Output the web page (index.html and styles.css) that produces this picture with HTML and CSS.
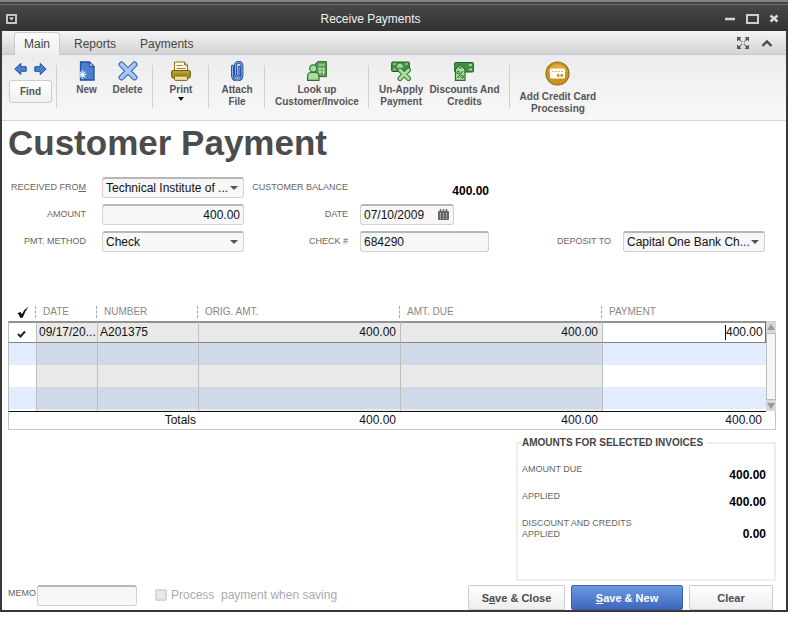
FILE: index.html
```html
<!DOCTYPE html>
<html lang="en">
<head>
<meta charset="utf-8">
<title>Receive Payments</title>
<link rel="stylesheet" href="styles.css">
</head>
<body>
<div class="window">
  <header class="titlebar">
    <button class="chrome" aria-label="Window menu"><svg width="11" height="10" viewBox="0 0 11 10"><rect x="1" y="1" width="9" height="8" fill="#333" stroke="#c4c4c4" stroke-width="2"/><path d="M3 3.5h5L5.500 6.500z" fill="#e0e0e0"/></svg></button>
    <h1 class="caption">Receive Payments</h1>
    <div class="chrome-group">
      <button class="chrome" aria-label="Minimize"><svg width="12" height="12" viewBox="0 0 12 12"><path d="M1 6h10" stroke="#d6d6d6" stroke-width="2.500"/></svg></button>
      <button class="chrome" aria-label="Maximize"><svg width="13" height="12" viewBox="0 0 13 12"><rect x="1" y="2" width="11" height="8" fill="none" stroke="#cfcfcf" stroke-width="2"/></svg></button>
      <button class="chrome" aria-label="Close"><svg width="10" height="12" viewBox="0 0 10 12"><path d="M1.500 2.500l7 6M8.500 2.500l-7 6" stroke="#dcdcdc" stroke-width="2.400"/></svg></button>
    </div>
  </header>

  <nav class="tabs">
    <a class="tab tab-active" href="#main">Main</a>
    <a class="tab" href="#reports">Reports</a>
    <a class="tab" href="#payments">Payments</a>
    <div class="tab-tools">
      <button class="chrome" aria-label="Expand"><svg width="12" height="12" viewBox="0 0 12 12"><g fill="#555"><path d="M0 0h4.500L0 4.500zM12 0v4.500L7.500 0zM0 12V7.500L4.500 12zM12 12H7.500L12 7.500z"/></g><path d="M1.500 1.500l3.500 3.500M10.500 1.500L7 5M1.500 10.500L5 7M10.500 10.500L7 7" stroke="#555" stroke-width="1.500" stroke-dasharray="3 1"/></svg></button>
      <button class="chrome" aria-label="Collapse ribbon"><svg width="12" height="12" viewBox="0 0 12 12"><path d="M1.500 9L6 4.500 10.500 9" fill="none" stroke="#4a4a4a" stroke-width="2.400"/></svg></button>
    </div>
  </nav>

  <div class="toolbar">
    <div class="group group-find">
      <div class="arrows">
        <button class="chrome" aria-label="Previous"><svg width="13" height="14" viewBox="0 0 13 14"><path d="M.8 7L6.800 1.300v3.400h5.400v4.600H6.800v3.400z" fill="#4d80cc" stroke="#27509b"/></svg></button>
        <button class="chrome" aria-label="Next"><svg width="13" height="14" viewBox="0 0 13 14"><path d="M12.200 7L6.200 1.300v3.400H.8v4.600h5.400v3.400z" fill="#4d80cc" stroke="#27509b"/></svg></button>
      </div>
      <button class="find">Find</button>
    </div>
    <div class="group group-pair">
      <button class="tool"><svg width="20" height="20" viewBox="0 0 20 20"><path d="M3.500 1h9L17 5.500V19H3.500z" fill="#4a80cf" stroke="#24509f" stroke-width="1.300"/><path d="M12.500 1v4.500H17z" fill="#b6d2f5" stroke="#24509f"/><path d="M5.500 9v9M1.500 13.500h8M2.500 10.500l6 6M8.500 10.500l-6 6" stroke="#bcd8fb" stroke-width="1.400"/><circle cx="5.500" cy="13.500" r="1.600" fill="#fff"/></svg>New</button>
      <button class="tool"><svg width="20" height="20" viewBox="0 0 20 20"><path d="M3.500 3.500l13 13M16.500 3.500l-13 13" stroke="#3f6cb2" stroke-width="6" stroke-linecap="round"/><path d="M3.500 3.500l13 13M16.500 3.500l-13 13" stroke="#a8cbf6" stroke-width="3.600" stroke-linecap="round"/></svg>Delete</button>
    </div>
    <div class="group">
      <button class="tool"><svg width="20" height="20" viewBox="0 0 20 20"><path d="M3.500 11V1h10L16.500 4v7z" fill="#fffbe2" stroke="#8a7420"/><path d="M13.500 1v3h3" fill="#ddd09a" stroke="#8a7420"/><path d="M5.500 4.500h6M5.500 7.500h9" stroke="#9b8430"/><rect x=".6" y="9.500" width="18.800" height="7.500" rx="1.500" fill="#ac9023" stroke="#6f5b0c"/><path d="M2 11h16" stroke="#cbb04a"/><rect x="3.500" y="15" width="13" height="4.400" rx="1" fill="#f0e3a0" stroke="#7c670f"/></svg>Print<span class="drop"></span></button>
    </div>
    <div class="group">
      <button class="tool"><svg width="20" height="20" viewBox="0 0 20 20"><path d="M5.500 5v9.500a4.700 4.700 0 0 0 9.400 0V4.500a3.200 3.200 0 0 0-6.400 0v9a1.800 1.800 0 0 0 3.600 0V6" fill="none" stroke="#2c559f" stroke-width="3" stroke-linecap="round"/><path d="M5.500 5v9.500a4.700 4.700 0 0 0 9.400 0V4.500a3.200 3.200 0 0 0-6.400 0v9a1.800 1.800 0 0 0 3.600 0V6" fill="none" stroke="#8eb4ee" stroke-width="1" stroke-linecap="round"/></svg>Attach<br>File</button>
    </div>
    <div class="group group-lookup">
      <button class="tool"><svg width="20" height="20" viewBox="0 0 20 20"><path d="M8.500 2.500L11 .6h8.400v15H8.500z" fill="#5d9f58" stroke="#2d6830"/><path d="M12 4h5.500M13 6.500v7M16.500 6.500v7M11 8h7M11 11h7" stroke="#c4e8b9"/><path d="M.6 19.400v-4.200q0-3.700 3.700-3.700h4q3.700 0 3.700 3.700v4.200z" fill="#a9dda0" stroke="#2f7134" stroke-width="1.200"/><circle cx="6.300" cy="7.500" r="3.600" fill="#a9dda0" stroke="#2f7134" stroke-width="1.200"/></svg>Look up<br>Customer/Invoice</button>
    </div>
    <div class="group group-credits">
      <button class="tool"><svg width="20" height="20" viewBox="0 0 20 20"><rect x=".6" y="1" width="17.800" height="9.500" rx="1" fill="#459047" stroke="#226029"/><circle cx="9" cy="5.500" r="2.700" fill="#a6dba0"/><path d="M2.500 3h2M2.500 8.500h2M14.500 3h2" stroke="#b9e5b1" stroke-width="1.500"/><path d="M9 9l8.500 8.500M17.500 9l-8.500 8.500" stroke="#2f7535" stroke-width="5" stroke-linecap="round"/><path d="M9 9l8.500 8.500M17.500 9l-8.500 8.500" stroke="#addfa5" stroke-width="3" stroke-linecap="round"/></svg>Un-Apply<br>Payment</button>
      <button class="tool"><svg width="20" height="20" viewBox="0 0 20 20"><rect x=".6" y="1.500" width="18.800" height="9.500" rx="1" fill="#459047" stroke="#226029"/><path d="M15 4h3M15 8.500h3" stroke="#b9e5b1" stroke-width="1.500"/><path d="M1.500 19.400V8L6 3.800 11 8v11.400z" fill="#a8dc9f" stroke="#2b6d31" stroke-width="1.200"/><circle cx="6.200" cy="6.800" r="1" fill="#2b6d31"/><path d="M9 10l-5.500 7" stroke="#285f2c"/><circle cx="4.300" cy="11.600" r="1.300" fill="none" stroke="#285f2c"/><circle cx="8.300" cy="15.700" r="1.300" fill="none" stroke="#285f2c"/></svg>Discounts And<br>Credits</button>
    </div>
    <div class="group group-card">
      <button class="tool tool-card"><svg width="25" height="25" viewBox="0 0 25 25"><circle cx="12.500" cy="12.500" r="11.500" fill="#c9951f" stroke="#94701c" stroke-width="1.200"/><path d="M3 11a9.700 9.700 0 0 1 19 0" fill="#dcab3c"/><rect x="5" y="7.500" width="15" height="10" rx="1.500" fill="#fffdf4"/><path d="M7 10.500h11" stroke="#ddbb66" stroke-dasharray="2 1"/><path d="M12 14.500h6" stroke="#c48a0c" stroke-width="2.500" stroke-dasharray="2.500 1"/></svg>Add Credit Card<br>Processing</button>
    </div>
  </div>

  <main class="content">
    <h2 class="heading">Customer Payment</h2>

    <form class="fields">
      <label class="label lead" for="from">RECEIVED FRO<u>M</u></label>
      <div class="pick"><select class="box" id="from"><option>Technical Institute of ...</option></select></div>
      <span class="label">CUSTOMER BALANCE</span>
      <output class="balance">400.00</output>

      <label class="label lead" for="amount">AMOUNT</label>
      <input class="box money" id="amount" value="400.00">
      <label class="label" for="date">DATE</label>
      <div class="box date">
        <input class="bare" id="date" value="07/10/2009">
        <button class="chrome" type="button" aria-label="Calendar"><svg width="11" height="12" viewBox="0 0 11 12"><rect x="0" y="2" width="11" height="9" rx="1" fill="#666"/><path d="M2.500 0v4M5.500 0v4M8.500 0v4" stroke="#666" stroke-width="1.500"/><path d="M2.500 4v6M5.500 4v6M8.500 4v6" stroke="#bbb" stroke-width="1" stroke-dasharray="1.500 .8"/></svg></button>
      </div>

      <label class="label lead" for="method">PMT. METHOD</label>
      <div class="pick"><select class="box" id="method"><option>Check</option></select></div>
      <label class="label" for="check">CHECK #</label>
      <input class="box" id="check" value="684290">
      <label class="label" for="deposit">DEPOSIT TO</label>
      <div class="pick"><select class="box" id="deposit"><option>Capital One Bank Ch...</option></select></div>
    </form>

    <table class="invoices">
      <colgroup><col class="c-tick"><col class="c-date"><col class="c-number"><col class="c-amount"><col class="c-amount"><col><col class="c-scroll"></colgroup>
      <thead>
        <tr>
          <th class="tick"><svg width="12" height="12" viewBox="0 0 12 12"><path d="M.5 7.500l3-1.700 1.300 2.400Q7.500 3 11.500 .5 8 5.500 5.700 11.700H3.200Q2.500 9 .5 7.500z" fill="#111"/></svg></th>
          <th><span>DATE</span></th><th><span>NUMBER</span></th><th><span>ORIG. AMT.</span></th><th><span>AMT. DUE</span></th><th><span>PAYMENT</span></th><th></th>
        </tr>
      </thead>
      <tbody>
        <tr class="selected">
          <td class="tick"><svg width="9" height="8" viewBox="0 0 9 8"><path d="M1 4l2.500 2.500L8 1.500" fill="none" stroke="#222" stroke-width="2"/></svg></td>
          <td>09/17/20...</td><td>A201375</td><td class="money">400.00</td><td class="money">400.00</td>
          <td class="money edit"><input class="bare pay" aria-label="Payment" value="400.00"></td>
          <td class="scroll" rowspan="5"><div class="bar"><span class="up"></span><span class="thumb"></span><span class="down"></span></div></td>
        </tr>
        <tr><td></td><td></td><td></td><td></td><td></td><td></td></tr>
        <tr><td></td><td></td><td></td><td></td><td></td><td></td></tr>
        <tr><td></td><td></td><td></td><td></td><td></td><td></td></tr>
        <tr class="stub"><td></td><td></td><td></td><td></td><td></td><td></td></tr>
      </tbody>
      <tfoot>
        <tr><td colspan="3" class="money">Totals</td><td class="money">400.00</td><td class="money">400.00</td><td class="money">400.00</td><td></td></tr>
      </tfoot>
    </table>

    <fieldset class="summary">
      <legend>AMOUNTS FOR SELECTED INVOICES</legend>
      <dl>
        <div class="line"><dt>AMOUNT DUE</dt><dd>400.00</dd></div>
        <div class="line"><dt>APPLIED</dt><dd>400.00</dd></div>
        <div class="line"><dt>DISCOUNT AND CREDITS<br>APPLIED</dt><dd>0.00</dd></div>
      </dl>
    </fieldset>
  </main>

  <footer class="footer">
    <label class="memo-label" for="memo">MEMO</label>
    <input class="box memo" id="memo">
    <label class="process"><input type="checkbox" disabled>Process  payment when saving</label>
    <div class="actions">
      <button class="btn">S<u>a</u>ve &amp; Close</button>
      <button class="btn btn-primary"><u>S</u>ave &amp; New</button>
      <button class="btn">Clear</button>
    </div>
  </footer>
</div>
</body>
</html>
```
FILE: styles.css
```css
* { box-sizing: border-box; }

body {
  margin: 0;
  padding-bottom: 6px;
  min-height: 100vh;
  display: flex;
  flex-direction: column;
  background: #fff;
  color: #111;
  font: 12px/14px "Liberation Sans", Arial, sans-serif;
}

button, input, select { font: inherit; color: inherit; }

.window {
  flex: 1;
  display: flex;
  flex-direction: column;
  border: 2px solid #38383a;
  border-top: 0;
}

.chrome {
  display: flex;
  padding: 0;
  border: 0;
  background: none;
}

/* Title bar */
.titlebar {
  display: flex;
  align-items: center;
  height: 31px;
  margin: 0 -2px;
  padding: 4px 9px 0 6px;
  border-top: 2px solid #858585;
  background: linear-gradient(#414141 0 2px, #6e6e6e 2px 3px, #484848 3px, #323232);
}
.caption {
  flex: 1;
  margin: 0;
  text-align: center;
  font-size: 12px;
  font-weight: normal;
  color: #f2f2f2;
}
.chrome-group { display: flex; gap: 10px; }

/* Tabs */
.tabs {
  display: flex;
  align-items: flex-end;
  height: 24px;
  padding-left: 12px;
  background: linear-gradient(#f4f4f4, #d3d3d3);
  border-bottom: 1px solid #c3cadf;
}
.tab {
  height: 22px;
  padding: 5px 12px 0;
  color: #444;
  text-decoration: none;
}
.tab-active {
  margin: 0 2px -1px 0;
  height: 23px;
  padding: 4px 9px 0;
  border: 1px solid #ccc;
  border-bottom: 0;
  border-radius: 3px 3px 0 0;
  background: linear-gradient(#fafafa, #f0f0f0);
}
.tab-tools {
  display: flex;
  gap: 12px;
  margin-left: auto;
  padding: 0 13px 5px 0;
}

/* Toolbar */
.toolbar {
  display: flex;
  height: 66px;
  padding-top: 5px;
  background: linear-gradient(#ececec, #f8f8f8);
  border-bottom: 1px solid #d4d4d4;
}
.group {
  position: relative;
  display: flex;
  justify-content: center;
  min-width: 56px;
  padding: 0 10px;
}
.group:not(:last-child)::after {
  content: "";
  position: absolute;
  right: 0;
  top: 5px;
  height: 43px;
  border-right: 1px solid #cfcfcf;
}
.group-find {
  flex-direction: column;
  justify-content: flex-start;
  gap: 4px;
  min-width: 55px;
  padding: 2px 5px 0 7px;
}
.arrows { display: flex; justify-content: space-between; padding: 0 5px; }
.find {
  height: 23px;
  padding: 0;
  border: 1px solid #ccc;
  border-radius: 3px;
  background: linear-gradient(#fff, #f0f0f0);
  font-size: 10px;
  font-weight: bold;
  color: #555;
}
.group-pair { padding: 0 5px 0 9px; }
.group-pair .tool { width: 41px; }
.group-credits { gap: 6px; }
.tool {
  display: block;
  align-self: flex-start;
  padding: 1px 0 0;
  border: 0;
  background: none;
  font-size: 10px;
  font-weight: bold;
  line-height: 12px;
  color: #555;
  white-space: nowrap;
}
.tool svg { display: block; margin: 0 auto 3px; }
.tool-card svg { margin-bottom: 5px; }
.drop {
  display: block;
  width: 0;
  margin: 1px auto 0;
  border: 3px solid transparent;
  border-top: 4px solid #111;
}

/* Form */
.content { flex: 1; padding: 0 10px 0 6px; }
.heading {
  margin: 0;
  padding-top: 2px;
  font-size: 35px;
  line-height: 40px;
  color: #4c4c4c;
}
.fields {
  display: grid;
  grid-template-columns: 86px 142px 100px 129px 1fr 142px;
  gap: 6px 8px;
  align-items: center;
  padding: 14px 11px 0 0;
}
.label {
  justify-self: end;
  padding: 0 4px 2px 0;
  font-size: 9px;
  line-height: 12px;
  color: #666;
  white-space: nowrap;
}
.lead { grid-column: 1; padding-right: 8px; }
.box {
  width: 100%;
  height: 21px;
  padding: 0 3px;
  border: 1px solid #d2d2d2;
  border-top: 2px solid #b5b8b5;
  border-radius: 3px;
  background: #f7f7f7;
}
.money { text-align: right; }
.pick { display: grid; align-items: center; }
.pick > * , .pick::after { grid-area: 1 / 1; }
.pick select { appearance: none; }
.pick::after {
  content: "";
  justify-self: end;
  margin-right: 6px;
  border: 4px solid transparent;
  border-top-color: #555;
  border-bottom: 0;
  pointer-events: none;
}
.balance {
  justify-self: end;
  padding-top: 6px;
  font-weight: bold;
  color: #000;
}
.date {
  display: flex;
  align-items: center;
  width: 94px;
  padding-right: 4px;
}
.bare {
  flex: 1;
  min-width: 0;
  padding: 0;
  border: 0;
  background: none;
  outline: 0;
}

/* Invoice table */
.invoices {
  width: 100%;
  margin-top: 50px;
  table-layout: fixed;
  border-collapse: separate;
  border-spacing: 0;
}
.c-tick { width: 28px; }
.c-date { width: 61px; }
.c-number { width: 101px; }
.c-amount { width: 202px; }
.c-scroll { width: 10px; }
.invoices th {
  height: 19px;
  padding: 0;
  text-align: left;
  vertical-align: middle;
  font-size: 10px;
  font-weight: normal;
  line-height: 12px;
  color: #888;
}
.invoices th span {
  display: block;
  margin-left: -1px;
  padding-left: 7px;
  border-left: 1px dashed #aaa;
}
.invoices .tick { text-align: center; }
.invoices th.tick { padding-left: 2px; text-align: center; }
.tick svg { vertical-align: middle; }
.invoices td {
  height: 22px;
  padding: 0 4px 1px 2px;
  white-space: nowrap;
}
.invoices td svg { margin-top: 2px; }
.invoices tbody td:nth-child(n+2):nth-child(-n+5) {
  background: #e9e9e9;
  border-left: 1px solid #bdbdbd;
}
.invoices tbody td:nth-child(6) { border-left: 1px solid #bdbdbd; }
.invoices tbody td:first-child { border-left: 1px solid #bbb; }
.invoices tbody tr:nth-child(even) td { background: #e1edff; }
.invoices tbody tr:nth-child(even) td:nth-child(n+2):nth-child(-n+5) { background: #cedae8; }
.invoices .selected td:not(.scroll) {
  border-top: 2px solid #919391;
  border-bottom: 1px solid #858585;
}
.invoices .selected .edit { border-right: 1px solid #666; padding-right: 2px; }
.invoices .stub td { height: 2px; padding: 0; }
.pay {
  width: 38px;
  height: 15px;
  border-left: 1px solid #000;
}
.invoices .scroll { padding: 0; border-top: 1px solid #ccc; }
.bar {
  display: flex;
  flex-direction: column;
  align-items: center;
  gap: 3px;
  height: 89px;
  padding: 2px 0;
  background: #d8d8d8;
}
.up, .down { border: 4px solid transparent; }
.up { border-top: 0; border-bottom: 6px solid #999; }
.down { border-bottom: 0; border-top: 6px solid #999; }
.thumb {
  flex: 1;
  width: 100%;
  border: 1px solid #bbb;
  background: #f5f5f5;
}
.invoices tfoot td {
  height: 19px;
  border-top: 1px solid #111;
  border-bottom: 1px solid #c4c4c4;
}
.invoices tfoot td:first-child { padding-right: 2px; border-left: 1px solid #c4c4c4; }
.invoices tfoot td:last-child { border-top: 0; border-right: 1px solid #c4c4c4; }

/* Summary */
.summary {
  width: 260px;
  min-height: 144px;
  margin: 7px 0 0 auto;
  padding: 0 8px 0 4px;
  border: 2px solid #eee;
}
.summary legend {
  padding: 0 3px 0 0;
  font-size: 10px;
  font-weight: bold;
  line-height: 12px;
  color: #444;
}
.summary dl {
  display: flex;
  flex-direction: column;
  gap: 10px;
  margin: 0;
  padding-top: 15px;
}
.line { display: flex; justify-content: space-between; min-height: 17px; }
.line dt { font-size: 9px; line-height: 11px; color: #666; }
.line dd {
  align-self: flex-end;
  margin: 0;
  font-weight: bold;
  line-height: 12px;
  color: #000;
}

/* Footer */
.footer {
  display: flex;
  align-items: flex-start;
  padding: 0 13px 0 6px;
}
.memo-label {
  width: 29px;
  font-size: 9px;
  line-height: 16px;
  color: #666;
}
.memo { width: 100px; }
.process {
  display: flex;
  align-items: center;
  gap: 4px;
  height: 19px;
  margin-left: 18px;
  color: #aaa;
  white-space: pre;
}
.process input {
  appearance: none;
  width: 12px;
  height: 12px;
  margin: 0;
  border: 2px solid #d6d6d6;
  border-radius: 2px;
  background: #e8e8e8;
}
.actions {
  display: grid;
  grid-template-columns: 97px 112px 84px;
  gap: 6px;
  margin-left: auto;
}
.btn {
  height: 25px;
  padding: 0;
  border: 1px solid #ccc;
  border-radius: 2px;
  background: linear-gradient(#fff, #eee);
  font-size: 11px;
  font-weight: bold;
  color: #4c4c4c;
}
.btn-primary {
  border-color: #3b62ac;
  background: linear-gradient(#6a99df, #3f68bd);
  color: #fff;
}
```
